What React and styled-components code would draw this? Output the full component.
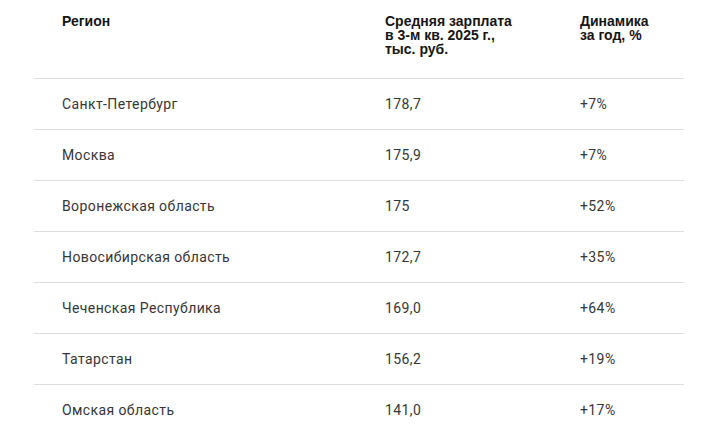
import React from 'react';
import styled, { createGlobalStyle } from 'styled-components';

const GlobalStyle = createGlobalStyle`
  body {
    margin: 0;
    background: #ffffff;
    font-family: Roboto, "Liberation Sans", sans-serif;
  }
`;

const Page = styled.div`
  padding: 0 25px 0 34px;
  width: 709px;
  box-sizing: border-box;
`;

const Table = styled.div`
  display: grid;
  grid-template-columns: 351px 195px 1fr;
`;

const HeadCell = styled.div`
  padding: 14px 0 0 ${p => p.$pad}px;
  height: 64px;
  font-family: "Liberation Sans", Arial, sans-serif;
  font-size: 14px;
  line-height: 14px;
  font-weight: 700;
  color: #151515;
  white-space: nowrap;
`;

const Cell = styled.div`
  display: flex;
  align-items: center;
  height: 50px;
  border-top: 1px solid #dedede;
  padding-left: ${p => p.$pad}px;
  font-size: 14px;
  color: #363636;
  letter-spacing: 0.4px;
`;

const rows = [
  ['Санкт-Петербург', '178,7', '+7%'],
  ['Москва', '175,9', '+7%'],
  ['Воронежская область', '175', '+52%'],
  ['Новосибирская область', '172,7', '+35%'],
  ['Чеченская Республика', '169,0', '+64%'],
  ['Татарстан', '156,2', '+19%'],
  ['Омская область', '141,0', '+17%'],
];

export default function App() {
  return (
    <>
      <GlobalStyle />
      <Page>
        <Table>
          <HeadCell $pad={28}>Регион</HeadCell>
          <HeadCell $pad={0}>Средняя зарплата<br />в 3-м кв. 2025 г.,<br />тыс. руб.</HeadCell>
          <HeadCell $pad={0}>Динамика<br />за год, %</HeadCell>
          {rows.map(r => (
            <React.Fragment key={r[0]}>
              <Cell $pad={28}>{r[0]}</Cell>
              <Cell $pad={0}>{r[1]}</Cell>
              <Cell $pad={0}>{r[2]}</Cell>
            </React.Fragment>
          ))}
        </Table>
      </Page>
    </>
  );
}
